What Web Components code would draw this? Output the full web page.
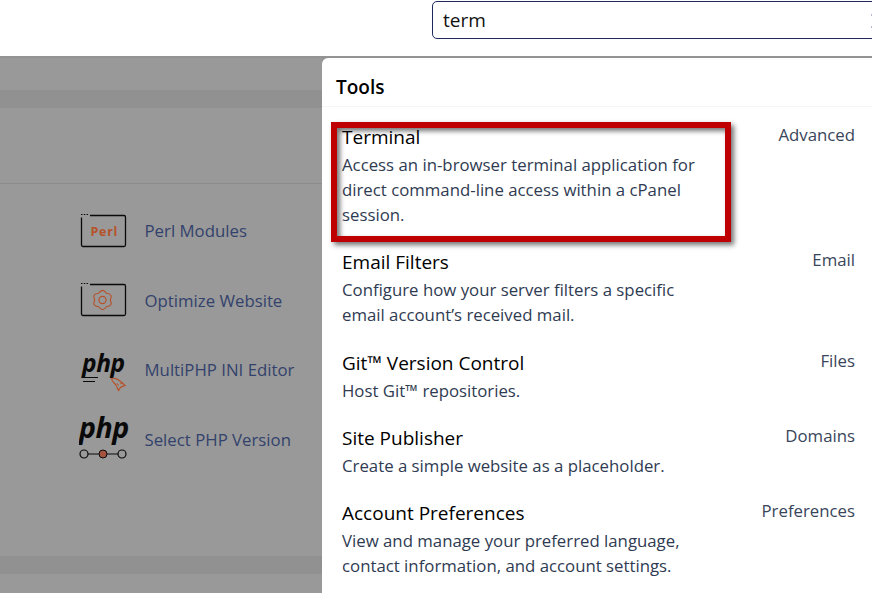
<!DOCTYPE html>
<html>
<head>
<meta charset="utf-8">
<title>Tools search</title>
<style>
    html, body { margin: 0; height: 593px; overflow: hidden; background: #fff; }
    body { font-family: 'Open Sans', sans-serif; }
</style>
</head>
<body>
<page-header></page-header>
<page-main>
    <side-list slot="left">
        <side-item label="Perl Modules"><icon-perl></icon-perl></side-item>
        <side-item label="Optimize Website"><icon-optimize></icon-optimize></side-item>
        <side-item label="MultiPHP INI Editor"><icon-multiphp></icon-multiphp></side-item>
        <side-item label="Select PHP Version"><icon-selectphp></icon-selectphp></side-item>
    </side-list>
    <tools-panel slot="right">
        <tool-row name="Terminal" group="Advanced">Access an in-browser terminal application for<br>direct command-line access within a cPanel<br>session.</tool-row>
        <tool-row name="Email Filters" group="Email">Configure how your server filters a specific<br>email account’s received mail.</tool-row>
        <tool-row name="Git™ Version Control" group="Files">Host Git™ repositories.</tool-row>
        <tool-row name="Site Publisher" group="Domains">Create a simple website as a placeholder.</tool-row>
        <tool-row name="Account Preferences" group="Preferences">View and manage your preferred language,<br>contact information, and account settings.</tool-row>
    </tools-panel>
</page-main>

<script>
class PageHeader extends HTMLElement {
    constructor() {
        super();
        this.attachShadow({ mode: 'open' });
        this.shadowRoot.innerHTML = `
            <style>
                :host {
                    display: flex;
                    height: 56px;
                    padding: 1px 0 0 432px;
                    box-sizing: border-box;
                    background: #fff;
                    overflow: hidden;
                }
                .search {
                    flex: none;
                    display: flex;
                    width: 470px;
                    height: 38px;
                    box-sizing: border-box;
                    padding-left: 10px;
                    border: 1px solid #1f2a5c;
                    border-radius: 5px;
                    font-size: 19px;
                    line-height: 36px;
                    color: #111;
                }
                .text { width: 428px; }
                /* edge of the clear button, only its two dots are in view */
                .dots {
                    width: 1px;
                    height: 10px;
                    margin-top: 12px;
                    border-top: 2px solid #b9b5cf;
                    border-bottom: 2px solid #b9b5cf;
                }
            </style>
            <div class="search"><div class="text">term</div><div class="dots"></div></div>
        `;
    }
}

class PageMain extends HTMLElement {
    constructor() {
        super();
        this.attachShadow({ mode: 'open' });
        this.shadowRoot.innerHTML = `
            <style>
                :host {
                    display: grid;
                    grid-template-columns: 322px 1fr;
                    height: 537px;
                    padding-top: 2px;
                    box-sizing: border-box;
                    background: #939393;
                }
                .left {
                    display: block;
                    background: #999;
                }
            </style>
            <div class="left"><slot name="left"></slot></div>
            <slot name="right"></slot>
        `;
    }
}

class SideList extends HTMLElement {
    constructor() {
        super();
        this.attachShadow({ mode: 'open' });
        this.shadowRoot.innerHTML = `
            <style>
                :host {
                    display: block;
                    height: 535px;
                    padding-top: 32px;
                    box-sizing: border-box;
                }
                .band { height: 18px; background: #919191; }
                .rule { height: 1px; margin-top: 75px; background: #8c8c8c; }
                .items {
                    display: flex;
                    flex-direction: column;
                    height: 372px;
                    padding: 12px 0 0 80px;
                    box-sizing: border-box;
                }
            </style>
            <div class="band"></div>
            <div class="rule"></div>
            <div class="items"><slot></slot></div>
            <div class="band"></div>
        `;
    }
}

class SideItem extends HTMLElement {
    constructor() {
        super();
        this.attachShadow({ mode: 'open' });
        this.shadowRoot.innerHTML = `
            <style>
                :host {
                    display: flex;
                    flex: none;
                    align-items: center;
                    height: 69.600px;
                    font-size: 16.800px;
                    color: #33426c;
                }
                .icon { width: 64.500px; flex: none; }
            </style>
            <div class="icon"><slot></slot></div>
            <span>${this.getAttribute('label')}</span>
        `;
    }
}

// the framed icons share one outline with three little dots on the top left
const frame = `<path d="M10 1.500H44a1.500 1.500 0 0 1 1.500 1.500V31a1.500 1.500 0 0 1-1.500 1.500H3A1.500 1.500 0 0 1 1.500 31V3.500" fill="none" stroke="#0a0a0a" stroke-width="1.300"/>
    <path d="M1 .5h1.500M3.800 .5h1.500M6.600 .5h1.500" stroke="#0a0a0a" stroke-width="1"/>`;

// six round lobes around a centre, point up
function gearPath(cx, cy, outer, inner) {
    const pt = (deg, r) => {
        const a = deg * Math.PI / 180;
        return (cx + r * Math.cos(a)).toFixed(2) + ' ' + (cy + r * Math.sin(a)).toFixed(2);
    };
    let d = 'M' + pt(-120, inner);
    for (let i = 0; i < 6; i++) {
        const deg = -90 + i * 60;
        d += 'Q' + pt(deg, outer) + ' ' + pt(deg + 30, inner);
    }
    return d + 'Z';
}

class IconPerl extends HTMLElement {
    constructor() {
        super();
        this.attachShadow({ mode: 'open' });
        this.shadowRoot.innerHTML = `
            <style>
                :host { display: block; height: 34px; }
                svg { display: block; }
                text { font: 700 12.500px 'Open Sans', sans-serif; letter-spacing: .7px; fill: #b5522a; }
            </style>
            <svg width="47" height="34" viewBox="0 0 47 34">${frame}<text x="10.500" y="21.500">Perl</text></svg>
        `;
    }
}

class IconOptimize extends HTMLElement {
    constructor() {
        super();
        this.attachShadow({ mode: 'open' });
        this.shadowRoot.innerHTML = `
            <style>
                :host { display: block; height: 34px; }
                svg { display: block; }
            </style>
            <svg width="47" height="34" viewBox="0 0 47 34">${frame}
                <path d="${gearPath(22.500, 17, 12.500, 7.800)}" fill="none" stroke="#b5522a" stroke-width="1.200"/>
                <circle cx="22.500" cy="17" r="3.600" fill="none" stroke="#b5522a" stroke-width="1.200"/>
            </svg>
        `;
    }
}

class IconMultiphp extends HTMLElement {
    constructor() {
        super();
        this.attachShadow({ mode: 'open' });
        this.shadowRoot.innerHTML = `
            <style>
                :host { display: flow-root; height: 40px; margin-left: 1px; }
                svg { display: block; margin-top: -8px; }
                text { font: italic 700 24.500px 'Open Sans', sans-serif; letter-spacing: -.4px; fill: #0a0a0a; }
            </style>
            <svg width="50" height="52" viewBox="0 -8 50 52">
                <text x="1" y="22">php</text>
                <path d="M2 27.500H17M2 31.500H14" stroke="#0a0a0a" stroke-width="1.200"/>
                <path d="M30.500 28.500c4-1.500 9.500 3 13.500 7-2 .5-3.500 .8-5 2.500-.5.8-.8 1.500-1.500 2.500-1-2-1.500-4-3-6-1.500-1.800-3.500-3-4-6zM36 33.500l1.500 2M39.500 33l1 1" fill="none" stroke="#b5522a" stroke-width="1.200"/>
            </svg>
        `;
    }
}

class IconSelectphp extends HTMLElement {
    constructor() {
        super();
        this.attachShadow({ mode: 'open' });
        this.shadowRoot.innerHTML = `
            <style>
                :host { display: flow-root; height: 42px; margin-left: -1px; }
                svg { display: block; margin-top: -16px; }
                text { font: italic 700 28.500px 'Open Sans', sans-serif; letter-spacing: -.5px; fill: #0a0a0a; }
            </style>
            <svg width="52" height="60" viewBox="0 -16 52 60">
                <text x="0" y="18.500">php</text>
                <path d="M9 35H20M28 35H39" stroke="#0a0a0a" stroke-width="1.200"/>
                <circle cx="5" cy="35" r="4" fill="none" stroke="#0a0a0a" stroke-width="1.200"/>
                <circle cx="24" cy="35" r="4" fill="#a4533f" stroke="#0a0a0a" stroke-width="1"/>
                <circle cx="43" cy="35" r="4" fill="none" stroke="#0a0a0a" stroke-width="1.200"/>
            </svg>
        `;
    }
}

class ToolsPanel extends HTMLElement {
    constructor() {
        super();
        this.attachShadow({ mode: 'open' });
        this.shadowRoot.innerHTML = `
            <style>
                :host {
                    display: block;
                    position: relative;
                    background: #fff;
                    border-top-left-radius: 6px;
                    overflow: hidden;
                }
                h2 {
                    margin: 0;
                    height: 49px;
                    padding: 15px 0 0 14px;
                    box-sizing: border-box;
                    border-bottom: 1px solid #f5f5f5;
                    font-size: 19px;
                    line-height: 28px;
                    font-weight: 600;
                    color: #000;
                }
                .rows { padding: 14.600px 17px 0 20px; }
                .mark {
                    position: absolute;
                    left: 9px;
                    top: 64px;
                    width: 400px;
                    height: 120px;
                    box-sizing: border-box;
                    border: 6px solid #bf0000;
                    box-shadow: 3px 3px 5px rgba(0, 0, 0, .55), inset 3px 3px 5px rgba(0, 0, 0, .55);
                }
            </style>
            <h2>Tools</h2>
            <div class="rows"><slot></slot></div>
            <div class="mark"></div>
        `;
    }
}

class ToolRow extends HTMLElement {
    constructor() {
        super();
        this.attachShadow({ mode: 'open' });
        this.shadowRoot.innerHTML = `
            <style>
                :host {
                    display: grid;
                    grid-template-columns: 1fr auto;
                    padding-bottom: 20px;
                    color: #2f3b52;
                    font-size: 16.800px;
                    line-height: 25.200px;
                }
                .name { font-size: 19px; line-height: 30px; color: #000; }
                .group { line-height: 26px; color: #39455a; }
                .desc { grid-column: 1 / -1; }
            </style>
            <div class="name">${this.getAttribute('name')}</div>
            <div class="group">${this.getAttribute('group')}</div>
            <div class="desc"><slot></slot></div>
        `;
    }
}

customElements.define('page-header', PageHeader);
customElements.define('page-main', PageMain);
customElements.define('side-list', SideList);
customElements.define('side-item', SideItem);
customElements.define('icon-perl', IconPerl);
customElements.define('icon-optimize', IconOptimize);
customElements.define('icon-multiphp', IconMultiphp);
customElements.define('icon-selectphp', IconSelectphp);
customElements.define('tools-panel', ToolsPanel);
customElements.define('tool-row', ToolRow);
</script>
</body>
</html>
